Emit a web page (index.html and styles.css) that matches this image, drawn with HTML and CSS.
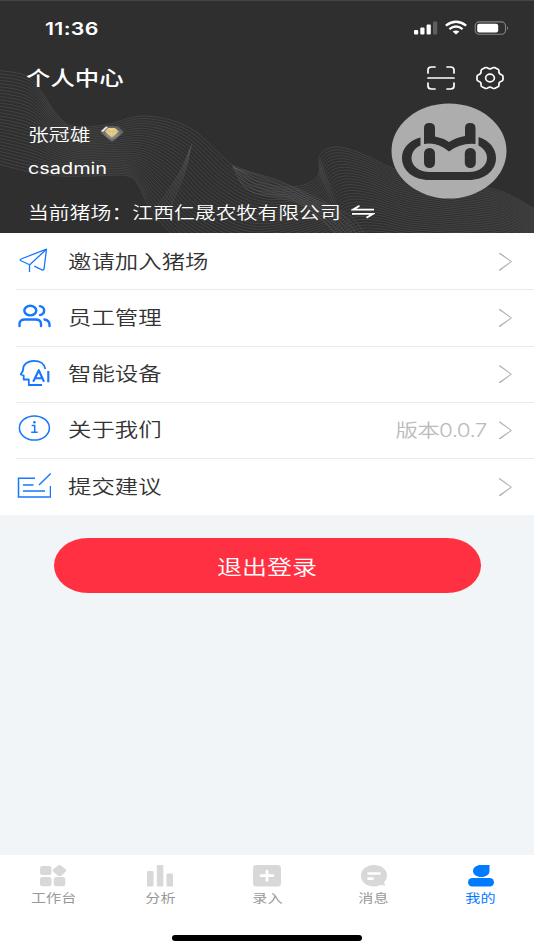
FILE: index.html
```html
<!DOCTYPE html>
<html lang="zh-CN">
  <head>
    <meta charset="UTF-8" />
    <meta name="viewport" content="width=device-width, initial-scale=1.0" />
    <title>个人中心</title>
    <link rel="stylesheet" href="styles.css">
  </head>
  <body>
    <header class="header">
      <svg class="waves" id="waves" viewBox="0 0 534 233"></svg>

      <div class="status-bar">
        <span class="wide time">11:36</span>
        <svg class="status-icons" width="96" height="16" viewBox="0 0 96 16">
          <g fill="#fff">
            <rect x="0" y="10" width="4.2" height="4.6" rx="1" />
            <rect x="6.300" y="7.600" width="4.2" height="7" rx="1" />
            <rect x="12.600" y="4.600" width="4.2" height="10" rx="1" />
            <rect x="19" y="1.600" width="4.2" height="13" rx="1" fill="#5e5e5e" />
            <path d="M42 14.400L38.600 11.600Q42 9.200 45.400 11.600Z" />
          </g>
          <g fill="none" stroke="#fff" stroke-width="2.300">
            <path d="M31.800 5.600Q42 -2.200 52.200 5.600" />
            <path d="M35.400 9.100Q42 3.900 48.600 9.100" />
          </g>
          <rect x="61.200" y="1.900" width="30.300" height="12.400" rx="4" fill="none" stroke="#858585" stroke-width="1.100" />
          <rect x="63.200" y="3.800" width="21" height="8.600" rx="2" fill="#fff" />
          <path d="M93 6.200Q95.200 8.100 93 10Z" fill="#858585" />
        </svg>
      </div>

      <div class="title-bar">
        <h1 class="wide title">个人中心</h1>
        <div class="title-actions">
          <svg width="28" height="24" viewBox="0 0 28 24" fill="none" stroke="#fff" stroke-width="1.700" stroke-linecap="round">
            <path d="M1 7V4Q1 1 4.500 1H8M20 1H23.500Q27 1 27 4V7M27 17V20Q27 23 23.500 23H20M8 23H4.500Q1 23 1 20V17M1 12H27" />
          </svg>
          <svg width="28" height="24" viewBox="0 0 28 24" fill="none" stroke="#fff" stroke-width="1.700" stroke-linejoin="round">
            <path d="M9.500 1.600Q11 1.200 12 2.300Q14 3.500 16 2.300Q17 1.200 18.500 1.600L22 3.200Q23.400 4 22.900 5.500Q22.800 8 25.500 8.700Q27 9.200 27 10.500V13.500Q27 14.800 25.500 15.300Q22.800 16 22.900 18.500Q23.400 20 22 20.800L18.500 22.400Q17 22.800 16 21.700Q14 20.500 12 21.700Q11 22.800 9.500 22.400L6 20.800Q4.600 20 5.100 18.500Q5.200 16 2.500 15.300Q1 14.800 1 13.500V10.500Q1 9.200 2.500 8.700Q5.200 8 5.100 5.500Q4.600 4 6 3.200Z" />
            <ellipse cx="14" cy="12" rx="4.400" ry="3.800" />
          </svg>
        </div>
      </div>

      <div class="profile">
        <div class="profile-info">
          <div class="name-row">
            <span class="wide name">张冠雄</span>
            <svg width="26" height="20" viewBox="0 0 26 20">
              <defs>
                <radialGradient id="gem"><stop offset="0" stop-color="#aaa" /><stop offset="1" stop-color="#555" /></radialGradient>
              </defs>
              <path d="M7 2H19L25 8L13 18L1 8Z" fill="url(#gem)" />
              <path d="M2 7L7 2.500L9 3L4 8Z" fill="#e8e8e8" />
              <path d="M9 4H16L19.500 7.500L12.800 13.500L6 7.500Z" fill="#ead08d" />
              <path d="M6 7.500H19.500M9 4L12.800 13.500L16 4" fill="none" stroke="#cfaf66" stroke-width=".5" />
            </svg>
          </div>
          <span class="wide account">csadmin</span>
        </div>
        <svg class="avatar" width="116" height="96" viewBox="0 0 116 96">
          <ellipse cx="58" cy="48" rx="57.500" ry="47.500" fill="#adadad" />
          <g fill="#2f2f2f">
            <path fill-rule="evenodd" d="M29.500 34.500C18 37.500 11 45 11 55C11 68 23 77 38 77H78C93 77 105 68 105 55C105 45 98 37.500 87.500 34V42.500C93 45.500 96 50 96 55C96 63 88 69 78 69H39C28 69 20.500 63 20.500 55C20.500 50 23.500 45 29.500 42.500Z" />
            <path d="M33 41V25Q33 20 38.300 20Q44 20 44 25V33.500Q52 35 58 39Q65 34.500 74 33V25Q74 20 79 20Q84.500 20 84.500 25V41Q70 39.500 58 48.500Q46 38.500 33 41Z" />
            <rect x="33" y="45" width="11" height="20" rx="5.300" />
            <rect x="73.800" y="45" width="11" height="20" rx="5.300" />
          </g>
        </svg>
      </div>

      <div class="farm-row">
        <span class="wide farm">当前猪场：江西仁晟农牧有限公司</span>
        <svg width="24" height="14" viewBox="0 0 24 14" fill="none" stroke="#fff" stroke-width="1.900">
          <path d="M23 4.600H2L8.500 .8M1 8.900H22L15.500 12.800" />
        </svg>
      </div>
    </header>

    <main class="main">
      <ul class="menu">
        <li class="menu-item">
          <svg class="menu-icon" viewBox="0 0 34 28" fill="none" stroke="#1677ff" stroke-width="1.300" stroke-linejoin="round">
            <path d="M12 17.500L3.500 13.500Q2.500 12.500 4 12L29.500 2.200L27 22Q26.600 23.500 25 22.800L17.200 19.200M29.500 2.200L12.500 18V25" />
          </svg>
          <span class="wide label">邀请加入猪场</span>
          <i class="arrow"></i>
        </li>
        <li class="menu-item">
          <svg class="menu-icon" viewBox="0 0 34 28" fill="none" stroke="#1677ff" stroke-width="2.400" stroke-linecap="round">
            <ellipse cx="13.300" cy="7.600" rx="6" ry="4.800" />
            <path d="M2.500 23V21Q2.500 16.500 8 16.500H18.500Q24 16.500 24 21V23M23 3.100C28.500 4.100 28.500 11.100 23 12.100M27.500 16.500Q32.500 17.500 32.500 21.500V23" />
          </svg>
          <span class="wide label">员工管理</span>
          <i class="arrow"></i>
        </li>
        <li class="menu-item">
          <svg class="menu-icon" viewBox="0 0 34 28" fill="none" stroke="#1677ff" stroke-width="1.800" stroke-linejoin="round">
            <path d="M28.300 10C27.500 5 23 1.800 17 1.800C10 1.800 5.500 6 6 11.500L3.800 15.500L6.700 16.500V20.500H11.800V26H25" />
            <path d="M16.200 22.700L21.800 11.200L27 22.700M18.300 19.200H25.300M31.300 12V23.200" stroke-width="2.100" />
          </svg>
          <span class="wide label">智能设备</span>
          <i class="arrow"></i>
        </li>
        <li class="menu-item">
          <svg class="menu-icon" viewBox="0 0 34 28" fill="none" stroke="#1677ff" stroke-width="1.500">
            <ellipse cx="17.400" cy="13" rx="15" ry="12.100" />
            <path d="M14.700 10.500H17.700V17.200M14.200 17.200H20.700" />
            <circle cx="17.400" cy="7.300" r="1.300" fill="#1677ff" stroke="none" />
          </svg>
          <span class="wide label">关于我们</span>
          <span class="wide version">版本0.0.7</span>
          <i class="arrow"></i>
        </li>
        <li class="menu-item">
          <svg class="menu-icon" viewBox="0 0 34 28" fill="none" stroke="#1677ff" stroke-width="1.500">
            <path d="M18 6.200H1.500V25H33.500V14M33.800 1.500L22 13M6 13H16.500M6 19H28" />
          </svg>
          <span class="wide label">提交建议</span>
          <i class="arrow"></i>
        </li>
      </ul>

      <button class="logout-btn"><span class="wide-center">退出登录</span></button>
    </main>

    <nav class="tab-bar">
      <div class="tabs">
        <a class="tab">
          <svg width="28" height="24" viewBox="0 0 28 24" fill="currentColor">
            <rect x="1" y="3" width="11.500" height="9" rx="2.500" />
            <path d="M18.500 3Q20.500 1.200 22.500 3L26.500 6Q28 7.500 26.500 9L22.500 12.500Q20.500 14 18.500 12.500L14.500 9Q13 7.500 14.500 6Z" />
            <rect x="1" y="14" width="11.500" height="9.200" rx="2.500" />
            <rect x="14.800" y="14" width="11.500" height="9.200" rx="2.500" />
          </svg>
          <span class="wide-center">工作台</span>
        </a>
        <a class="tab">
          <svg width="28" height="24" viewBox="0 0 28 24" fill="currentColor">
            <rect x="1" y="8" width="6.500" height="15.500" rx="1.200" />
            <rect x="10.800" y="2" width="6.500" height="21.500" rx="1.200" />
            <rect x="20.500" y="10.500" width="6.500" height="13" rx="1.200" />
          </svg>
          <span class="wide-center">分析</span>
        </a>
        <a class="tab">
          <svg width="28" height="24" viewBox="0 0 28 24" fill="currentColor">
            <rect x="0" y="2" width="28" height="21.500" rx="3.500" />
            <path d="M14 8V17.500M8 12.700H20" stroke="#fff" stroke-width="2.700" stroke-linecap="round" />
          </svg>
          <span class="wide-center">录入</span>
        </a>
        <a class="tab">
          <svg width="28" height="24" viewBox="0 0 28 24" fill="currentColor">
            <path d="M14 2C21.500 2 27 6.500 27 12.500Q27 16.500 24 19.500L25.500 22.500L20 22Q17.500 23.500 14 23.500C6.500 23.500 1 19 1 12.700C1 6.500 6.500 2 14 2Z" />
            <path d="M8.500 10.500H19.500M8.500 15.700H12.500" stroke="#fff" stroke-width="2.700" stroke-linecap="round" />
          </svg>
          <span class="wide-center">消息</span>
        </a>
        <a class="tab active">
          <svg width="28" height="24" viewBox="0 0 28 24" fill="currentColor">
            <path d="M14 2H22.500V8C22.500 11.500 19 14 14.300 14C9.500 14 6 11.500 6 8C6 4.500 9.500 2 14 2Z" />
            <rect x="1" y="15" width="26" height="8.500" rx="4.250" />
          </svg>
          <span class="wide-center">我的</span>
        </a>
      </div>
      <div class="home-indicator"></div>
    </nav>

    <script src="waves.js"></script>
  </body>
</html>
```
FILE: styles.css
```css
* {
  margin: 0;
  padding: 0;
  box-sizing: border-box;
}

body {
  font-family: Inter, 'Noto Sans CJK SC', sans-serif;
  background: #f1f5f7;
  height: 100vh;
  display: flex;
  flex-direction: column;
  overflow: hidden;
  color: #333;
}

svg {
  display: block;
  flex-shrink: 0;
}

/* Stretched lettering */
.wide,
.wide-center {
  display: inline-block;
  white-space: nowrap;
  transform: scaleX(1.22);
}

.wide {
  transform-origin: left center;
}

.header {
  position: relative;
  height: 233px;
  flex-shrink: 0;
  background: #2f2f2f;
  color: #fff;
  border-top: 1px solid #444;
}

.waves {
  position: absolute;
  top: -1px;
  left: 0;
  width: 534px;
  height: 233px;
  fill: none;
  stroke: #5a5a5a;
  stroke-width: 0.7;
  stroke-opacity: 0.65;
}

.status-bar,
.title-bar,
.profile,
.farm-row {
  position: relative;
  display: flex;
  align-items: center;
}

.status-bar {
  height: 54px;
  padding: 0 24px 0 45px;
  justify-content: space-between;
}

.time {
  font-size: 17.5px;
  font-weight: 600;
  letter-spacing: 0.25px;
  margin-top: 1px;
}

.title-bar {
  height: 46px;
  padding: 0 30px 0 25.5px;
  justify-content: space-between;
}

.title {
  font-size: 20px;
  font-weight: 500;
  line-height: 30px;
  margin-top: 2px;
}

.title-actions {
  display: flex;
  gap: 21px;
}

.profile {
  height: 98px;
  padding: 0 27px 0 27.5px;
  justify-content: space-between;
}

.profile-info {
  display: flex;
  flex-direction: column;
  gap: 9px;
  align-items: flex-start;
  margin-top: 1px;
}

.name-row {
  display: flex;
  align-items: center;
  gap: 20.5px;
}

.name,
.farm {
  font-size: 17.1px;
  line-height: 25px;
  font-weight: 350;
}

.account {
  font-size: 16.3px;
  line-height: 24px;
}

.avatar {
  margin-top: 2px;
}

.farm-row {
  height: 26px;
  padding-left: 28px;
  gap: 67px;
}

.menu {
  list-style: none;
  background: #fff;
  padding: 1px 0 0 16px;
}

.menu-item {
  height: 56.25px;
  display: flex;
  align-items: center;
  padding-right: 22px;
  border-bottom: 1px solid #e8eaec;
}

.menu-item:last-child {
  border-bottom: 0;
}

.menu-icon {
  width: 34px;
  height: 28px;
  margin: -2px 17px 0 0.5px;
}

.label {
  font-size: 19.2px;
  font-weight: 350;
  line-height: 28px;
  margin-right: auto;
}

.version {
  font-size: 18.4px;
  font-weight: 350;
  line-height: 28px;
  letter-spacing: -0.55px;
  color: #bbb;
  transform-origin: right center;
  margin-right: 12.5px;
}

.arrow {
  width: 13px;
  height: 18px;
  background: #b4b4b4;
  clip-path: polygon(0 0, 8% 0, 100% 50%, 8% 100%, 0 100%, 0 94%, 88% 50%, 0 6%);
}

.logout-btn {
  display: block;
  width: 427px;
  height: 55px;
  margin: 23px auto 0;
  border: none;
  border-radius: 34px / 27.5px;
  background: #ff3041;
  color: #fff;
  font: 350 20.5px 'Noto Sans CJK SC', sans-serif;
}

.tab-bar {
  height: 95px;
  margin-top: auto;
  background: #fff;
}

.tabs {
  display: flex;
  height: 80px;
  padding-top: 8px;
}

.tab {
  flex: 1;
  display: flex;
  flex-direction: column;
  align-items: center;
  color: #d8d8d8;
}

.tab span {
  font-size: 12.4px;
  line-height: 18px;
  margin-top: 3px;
  color: #999;
}

.tab.active,
.tab.active span {
  color: #007aff;
}

.home-indicator {
  width: 190px;
  height: 6px;
  margin: 0 auto;
  border-radius: 3px;
  background: #000;
}
```
FILE: waves.js
```js
// Each band blends from its first line to its last one
const bands = [
  {
    count: 30,
    from: [[-5, 70], [30, 78], [55, 112], [72, 126], [105, 125], [145, 116], [190, 128], [232, 165], [265, 184], [300, 186], [318, 175], [320, 155], [335, 147], [360, 153], [400, 171], [450, 182], [500, 191], [540, 212]],
    to: [[-5, 163], [30, 172], [60, 176], [90, 176], [128, 176], [140, 188], [150, 208], [180, 240], [240, 265], [310, 250], [340, 240], [352, 234], [365, 231], [385, 232], [410, 236], [450, 238], [500, 240], [540, 245]]
  },
  {
    count: 7,
    from: [[232, 165], [255, 174], [300, 190], [340, 212], [360, 240]],
    to: [[240, 182], [255, 193], [290, 198], [325, 222], [340, 242]]
  },
  {
    count: 7,
    from: [[232, 165], [250, 191], [300, 204], [335, 232], [350, 245]],
    to: [[234, 168], [280, 181], [315, 200], [350, 216], [370, 242]]
  },
  {
    count: 5,
    from: [[192, 144], [178, 175], [155, 210]],
    to: [[190, 150], [184, 175], [166, 215]]
  }
];

function curve(points) {
  let d = `M${points[0]}`;
  for (let i = 0; i < points.length - 1; i++) {
    const a = points[Math.max(i - 1, 0)];
    const b = points[i];
    const c = points[i + 1];
    const e = points[Math.min(i + 2, points.length - 1)];
    d += `C${b[0] + (c[0] - a[0]) / 6},${b[1] + (c[1] - a[1]) / 6} ${c[0] - (e[0] - b[0]) / 6},${c[1] - (e[1] - b[1]) / 6} ${c}`;
  }
  return d;
}

const waves = document.getElementById('waves');

bands.forEach(({ count, from, to }) => {
  for (let n = 0; n < count; n++) {
    const t = n / (count - 1);
    const points = from.map(([x, y], i) => [x + (to[i][0] - x) * t, y + (to[i][1] - y) * t]);
    const path = document.createElementNS('http://www.w3.org/2000/svg', 'path');
    path.setAttribute('d', curve(points));
    waves.appendChild(path);
  }
});
```
